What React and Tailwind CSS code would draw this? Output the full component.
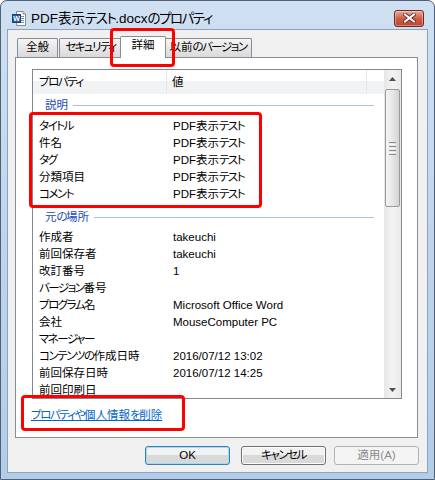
import React from 'react'

const descRows = [
  ['タイトル', 'PDF表示テスト'],
  ['件名', 'PDF表示テスト'],
  ['タグ', 'PDF表示テスト'],
  ['分類項目', 'PDF表示テスト'],
  ['コメント', 'PDF表示テスト'],
]

const originRows = [
  ['作成者', 'takeuchi'],
  ['前回保存者', 'takeuchi'],
  ['改訂番号', '1'],
  ['バージョン番号', ''],
  ['プログラム名', 'Microsoft Office Word'],
  ['会社', 'MouseComputer PC'],
  ['マネージャー', ''],
  ['コンテンツの作成日時', '2016/07/12 13:02'],
  ['前回保存日時', '2016/07/12 14:25'],
  ['前回印刷日', ''],
]

// kana in the old UI font are narrower than Noto's, so tighten them a little
function T({ s }) {
  const parts = s.match(/[\u3040-\u30ff]+|[^\u3040-\u30ff]+/g) || []
  return parts.map((p, i) =>
    /[\u3040-\u30ff]/.test(p) ? (
      <span key={i} className="tracking-[-1.5px]">
        {p}
      </span>
    ) : (
      <React.Fragment key={i}>{p}</React.Fragment>
    )
  )
}

function WordIcon() {
  return (
    <svg width="14" height="15" viewBox="0 0 14 15">
      <path d="M4.5 0.5 H11 L13.5 3 V14.5 H4.5 Z" fill="#fff" stroke="#8a8a8a" />
      <path d="M11 0.5 V3 H13.5" fill="#e6e6e6" stroke="#8a8a8a" />
      <rect x="8" y="5" width="4" height="1" fill="#6f8fc4" />
      <rect x="8" y="7" width="4" height="1" fill="#6f8fc4" />
      <rect x="8" y="9" width="4" height="1" fill="#6f8fc4" />
      <rect x="8" y="11" width="4" height="1" fill="#6f8fc4" />
      <rect x="0.5" y="3.5" width="8" height="8" fill="#2a5aa8" stroke="#1d3f7a" />
      <text x="4.5" y="10" textAnchor="middle" fontSize="7" fontWeight="bold" fill="#fff" fontFamily="Liberation Sans, sans-serif">W</text>
    </svg>
  )
}

function CloseButton() {
  return (
    <div className="flex h-[17px] w-[30px] items-center justify-center rounded-[3px] border border-[#6b2a1f] bg-linear-to-b from-[#e9aa9b] via-[#cf5d45] to-[#c0442b] shadow-[inset_0_0_0_1px_rgba(255,255,255,0.35)]">
      <svg width="13" height="10" viewBox="0 0 13 10">
        <path d="M2 1.5 L11 8.5 M11 1.5 L2 8.5" stroke="#5a2a22" strokeWidth="3.6" strokeLinecap="square" />
        <path d="M2 1.5 L11 8.5 M11 1.5 L2 8.5" stroke="#fff" strokeWidth="2" strokeLinecap="square" />
      </svg>
    </div>
  )
}

function Group({ label, className }) {
  return (
    <div className={`flex h-[16px] items-center pl-[12px] pr-[10px] ${className}`}>
      <span className="text-[#2248b8]">
        <T s={label} />
      </span>
      <div className="ml-[5px] h-px flex-1 bg-[#abc0e4]" />
    </div>
  )
}

function Row({ name, value }) {
  return (
    <div className="flex h-[17px] items-center whitespace-nowrap">
      <div className="w-[134px] pl-[6px]">
        <T s={name} />
      </div>
      <div className="pl-[6px]">
        <T s={value} />
      </div>
    </div>
  )
}

function Tab({ label, className }) {
  return (
    <div className={`flex justify-center whitespace-nowrap rounded-t-[2px] border border-b-0 border-[#898c95] ${className}`}>
      <T s={label} />
    </div>
  )
}

function ScrollBar() {
  return (
    <div className="flex w-[17px] flex-col bg-linear-to-r from-[#e6e6e6] via-[#f3f3f3] to-[#e9e9e9]">
      <div className="flex h-[17px] items-center justify-center">
        <svg width="7" height="4" viewBox="0 0 7 4">
          <path d="M3.5 0 L7 4 H0 Z" fill="#4f4f4f" />
        </svg>
      </div>
      <div className="mx-px mt-[2px] flex h-[118px] flex-col items-center justify-center gap-[1px] rounded-[2px] border border-[#999999] bg-linear-to-r from-[#f4f4f4] via-[#e7e7e7] to-[#d3d3d3]">
        <div className="h-px w-[7px] bg-[#8a8a8a]" />
        <div className="h-px w-[7px] bg-[#fafafa]" />
        <div className="h-px w-[7px] bg-[#8a8a8a]" />
        <div className="h-px w-[7px] bg-[#fafafa]" />
        <div className="h-px w-[7px] bg-[#8a8a8a]" />
        <div className="h-px w-[7px] bg-[#fafafa]" />
        <div className="h-px w-[7px] bg-[#8a8a8a]" />
      </div>
      <div className="flex-1" />
      <div className="flex h-[17px] items-center justify-center">
        <svg width="7" height="4" viewBox="0 0 7 4">
          <path d="M0 0 H7 L3.5 4 Z" fill="#4f4f4f" />
        </svg>
      </div>
    </div>
  )
}

export default function App() {
  return (
    <div className="relative h-[480px] w-[435px] overflow-hidden bg-white font-['Liberation_Sans','Noto_Sans_CJK_JP',sans-serif] text-[11.5px] leading-[17px] text-black [font-feature-settings:'palt']">
      <div className="flex h-full flex-col rounded-t-[7px] border border-[#4e6178] bg-linear-to-b from-[#d0e0f2] via-[#bfd5ed] to-[#b3cce8]">
        {/* Title bar */}
        <div className="flex h-[28px] items-center pl-[11px] pr-[10px] pt-[6px]">
          <WordIcon />
          <span className="ml-[5px] text-[13.5px]">
            <T s="PDF表示テスト.docxのプロパティ" />
          </span>
          <div className="ml-auto">
            <CloseButton />
          </div>
        </div>

        {/* Client area */}
        <div className="mx-[6px] mb-[6px] flex-1 border border-[#8ca3bf] bg-[#f0f0f0]">
          {/* Tabs */}
          <div className="flex h-[27px] items-end pl-[9px] pt-[6px]">
            <Tab label="全般" className="h-[19px] w-[41px] bg-linear-to-b from-[#f4f4f4] to-[#dadada]" />
            <Tab label="セキュリティ" className="ml-px h-[19px] w-[63px] bg-linear-to-b from-[#f4f4f4] to-[#dadada]" />
            <Tab label="詳細" className="relative z-10 -mx-[2px] -mb-px h-[22px] w-[46px] bg-white" />
            <Tab label="以前のバージョン" className="h-[19px] w-[88px] bg-linear-to-b from-[#f4f4f4] to-[#dadada]" />
          </div>

          {/* Tab panel */}
          <div className="ml-[7px] h-[381px] w-[403px] border border-[#898c95] bg-white">
            <div className="ml-[16px] mt-[11px] flex h-[330px] w-[370px] border border-[#828790]">
              <div className="w-[351px] overflow-hidden">
                <div className="flex h-[24px] items-center bg-linear-to-b from-white from-45% to-[#f1f2f4] to-45%">
                  <div className="h-full w-[134px] border-r border-[#e3e6ea] pl-[6px] leading-[24px]">
                    <T s="プロパティ" />
                  </div>
                  <div className="h-full w-[200px] border-r border-[#e3e6ea] pl-[5px] leading-[24px]">値</div>
                </div>
                <Group label="説明" className="mb-[5px] mt-[3px]" />
                {descRows.map(([n, v]) => (
                  <Row key={n} name={n} value={v} />
                ))}
                <Group label="元の場所" className="mb-[4px] mt-[6px]" />
                {originRows.map(([n, v]) => (
                  <Row key={n} name={n} value={v} />
                ))}
              </div>
              <ScrollBar />
            </div>
            <div className="ml-[15px] mt-[9px] h-[14px] leading-[14px]">
              <span className="text-[#0066cc] underline">
                <T s="プロパティや個人情報を削除" />
              </span>
            </div>
          </div>

          {/* Buttons */}
          <div className="mt-[8px] flex justify-end pr-[8px]">
            <div className="flex h-[19px] w-[85px] items-center justify-center rounded-[3px] border border-[#3c7fb1] bg-linear-to-b from-[#f2f2f2] from-50% to-[#d9d9d9] to-50% shadow-[inset_0_0_0_1px_#9fdaf7]">OK</div>
            <div className="ml-[11px] flex h-[19px] w-[85px] items-center justify-center rounded-[3px] border border-[#707070] bg-linear-to-b from-[#f2f2f2] from-50% to-[#d9d9d9] to-50% shadow-[inset_0_0_0_1px_#fbfbfb]">
              <T s="キャンセル" />
            </div>
            <div className="ml-[8px] flex h-[19px] w-[85px] items-center justify-center rounded-[3px] border border-[#adb2b5] bg-[#f4f4f4] text-[#8a8a8a]">適用(A)</div>
          </div>
        </div>
      </div>

      {/* Red annotation boxes */}
      <div className="absolute left-[110px] top-[28px] h-[39px] w-[65px] rounded-[4px] border-[3px] border-[#ff0000]" />
      <div className="absolute left-[29px] top-[112px] h-[96px] w-[233px] rounded-[4px] border-[3px] border-[#ff0000]" />
      <div className="absolute left-[21px] top-[395px] h-[36px] w-[164px] rounded-[4px] border-[3px] border-[#ff0000]" />
    </div>
  )
}
